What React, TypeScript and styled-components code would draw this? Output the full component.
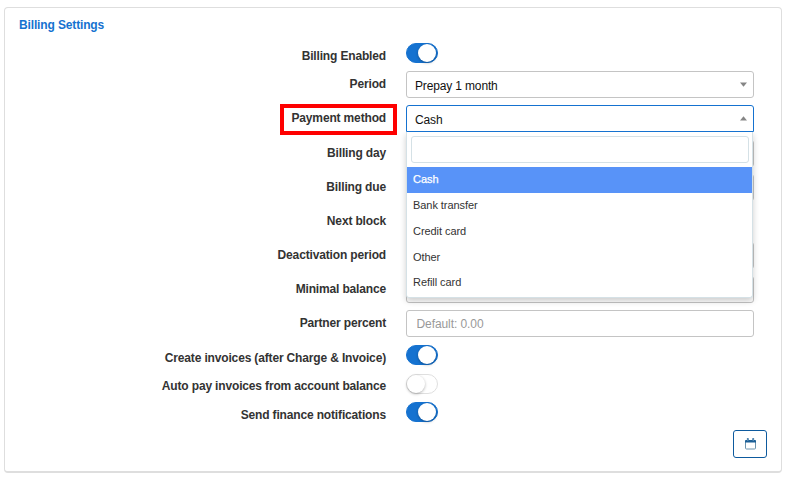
import React from "react";
import styled, { createGlobalStyle } from "styled-components";

const GlobalStyle = createGlobalStyle`
  * { box-sizing: border-box; }
  body { margin: 0; background: #fff; font-family: "Liberation Sans", Arial, sans-serif; font-size: 12px; color: #333; }
`;

const Panel = styled.section`
  width: 778px;
  height: 466px;
  margin: 7px 0 0 4px;
  border: 1px solid #dedede;
  border-bottom-width: 2px;
  border-radius: 4px;
  background: #fff;
  display: flex;
  flex-direction: column;
`;

const Title = styled.h2`
  margin: 0;
  padding: 9px 14px 0;
  height: 35px;
  font-size: 12px;
  line-height: 16px;
  font-weight: bold;
  letter-spacing: -0.14px;
  color: #1572d0;
`;

const Row = styled.div<{ $h: number }>`
  display: grid;
  grid-template-columns: 381px 348px;
  column-gap: 20px;
  height: ${(p) => p.$h}px;
`;

const Label = styled.label<{ $top: number }>`
  padding-top: ${(p) => p.$top}px;
  line-height: 14px;
  font-weight: bold;
  letter-spacing: -0.155px;
  text-align: right;
  white-space: nowrap;
`;

const Highlight = styled.div`
  position: absolute;
  left: 275px;
  top: -1px;
  width: 117px;
  height: 31px;
  border: 4px solid #fe0000;
`;

const HighlightedRow = styled(Row)`
  position: relative;
`;

const Field = styled.div<{ $open?: boolean; $low?: boolean }>`
  position: relative;
  height: 27px;
  margin-top: ${(p) => (p.$low ? 1 : 0)}px;
  padding: 3px 6px 0 8px;
  display: flex;
  align-items: center;
  justify-content: space-between;
  border: 1px solid ${(p) => (p.$open ? "#1572d0" : "#c4c4c4")};
  border-radius: ${(p) => (p.$open ? "3px 3px 0 0" : "3px")};
  background: #fff;
  color: #111;
  letter-spacing: -0.15px;
`;

const TextInput = styled.input`
  width: 348px;
  height: 27px;
  margin-top: 1px;
  padding: 0 9px 0 9.5px;
  border: 1px solid #c4c4c4;
  border-radius: 3px;
  font: 12px "Liberation Sans", Arial, sans-serif;
  letter-spacing: -0.08px;
  outline: none;
  &::placeholder { color: #999; opacity: 1; }
`;

const Arrow = styled.svg<{ $up?: boolean }>`
  width: 7px;
  height: 5px;
  margin-top: -4px;
  fill: #858585;
  transform: ${(p) => (p.$up ? "rotate(180deg)" : "none")};
`;

const Dropdown = styled.div`
  position: absolute;
  z-index: 2;
  left: -1px;
  top: 26px;
  width: 347px;
  height: 166px;
  background: #fff;
  border: 1px solid #d5e1e6;
  border-top: 0;
  border-radius: 0 0 3px 3px;
  box-shadow: 0 3px 6px rgba(0, 0, 0, 0.2);
  clip-path: inset(0 -10px -12px -10px);
  letter-spacing: -0.06px;
`;

const Search = styled.input`
  display: block;
  width: 338px;
  height: 27px;
  margin: 4px 4px 4.35px;
  border: 1px solid #d5e1e6;
  border-radius: 3px;
  outline: none;
`;

const Option = styled.div<{ $selected?: boolean }>`
  height: 25.75px;
  padding-left: 6px;
  line-height: 25px;
  font-size: 11px;
  background: ${(p) => (p.$selected ? "#5893f8" : "transparent")};
  color: ${(p) => (p.$selected ? "#fff" : "#333")};
  -webkit-text-stroke: ${(p) => (p.$selected ? "0.25px #fff" : "0")};
`;

const Switch = styled.span<{ $on?: boolean }>`
  display: block;
  width: 32px;
  height: 20px;
  border: 1px solid ${(p) => (p.$on ? "#1572d0" : "#dfdfdf")};
  border-radius: 10px;
  background: ${(p) => (p.$on ? "#1572d0" : "#fff")};
  &::after {
    content: "";
    display: block;
    width: 18px;
    height: 18px;
    margin-left: ${(p) => (p.$on ? 11 : 0)}px;
    border-radius: 50%;
    background: #fff;
    box-shadow: 0 1px 3px rgba(0, 0, 0, 0.3);
  }
`;

const Footer = styled.footer`
  display: flex;
  justify-content: flex-end;
  padding-right: 14px;
`;

const CalendarButton = styled.button`
  width: 34px;
  height: 28px;
  padding: 0 0 1px;
  display: flex;
  align-items: center;
  justify-content: center;
  border: 1px solid #0d5a9e;
  border-radius: 3px;
  background: #fff;
`;

const methods = ["Cash", "Bank transfer", "Credit card", "Other", "Refill card"];
const hiddenFields = ["Billing day", "Billing due", "Next block", "Deactivation period", "Minimal balance"];

const Caret = ({ up }: { up?: boolean }) => (
  <Arrow $up={up} viewBox="0 0 7 5">
    <path d="M0 0.5h7L3.5 4.8z" />
  </Arrow>
);

const CalendarIcon = () => (
  <svg width="11" height="12" viewBox="0 0 11 12">
    <rect x="0.5" y="2.5" width="10" height="8.5" rx="1" fill="#fff" stroke="#6c94ae" />
    <path d="M0 4.5V3q0-1 1-1h9q1 0 1 1v1.5z" fill="#1d6097" />
    <path d="M2.8 0.3v3M8.2 0.3v3" stroke="#1d6097" strokeWidth="1.8" />
    <path d="M2.8 1v2M8.2 1v2" stroke="#a9c9e0" strokeWidth="0.6" />
  </svg>
);

export default function App() {
  return (
    <>
      <GlobalStyle />
      <Panel>
        <Title>Billing Settings</Title>
        <Row $h={28}>
          <Label $top={6}>Billing Enabled</Label>
          <Switch $on />
        </Row>
        <Row $h={34}>
          <Label $top={6}>Period</Label>
          <Field>Prepay 1 month<Caret /></Field>
        </Row>
        <HighlightedRow $h={34}>
          <Label $top={6}>Payment method</Label>
          <Highlight />
          <Field $open>
            Cash
            <Caret up />
            <Dropdown>
              <Search aria-label="Search" />
              {methods.map((m, i) => (
                <Option key={m} $selected={i === 0}>{m}</Option>
              ))}
            </Dropdown>
          </Field>
        </HighlightedRow>
        {hiddenFields.map((name) => (
          <Row $h={34} key={name}>
            <Label $top={7}>{name}</Label>
            {name === "Next block" ? <span /> : <Field $low />}
          </Row>
        ))}
        <Row $h={36}>
          <Label $top={7}>Partner percent</Label>
          <TextInput placeholder="Default: 0.00" />
        </Row>
        <Row $h={29}>
          <Label $top={6}>Create invoices (after Charge &amp; Invoice)</Label>
          <Switch $on />
        </Row>
        <Row $h={28}>
          <Label $top={5}>Auto pay invoices from account balance</Label>
          <Switch />
        </Row>
        <Row $h={28}>
          <Label $top={6}>Send finance notifications</Label>
          <Switch $on />
        </Row>
        <Footer>
          <CalendarButton aria-label="Calendar"><CalendarIcon /></CalendarButton>
        </Footer>
      </Panel>
    </>
  );
}
